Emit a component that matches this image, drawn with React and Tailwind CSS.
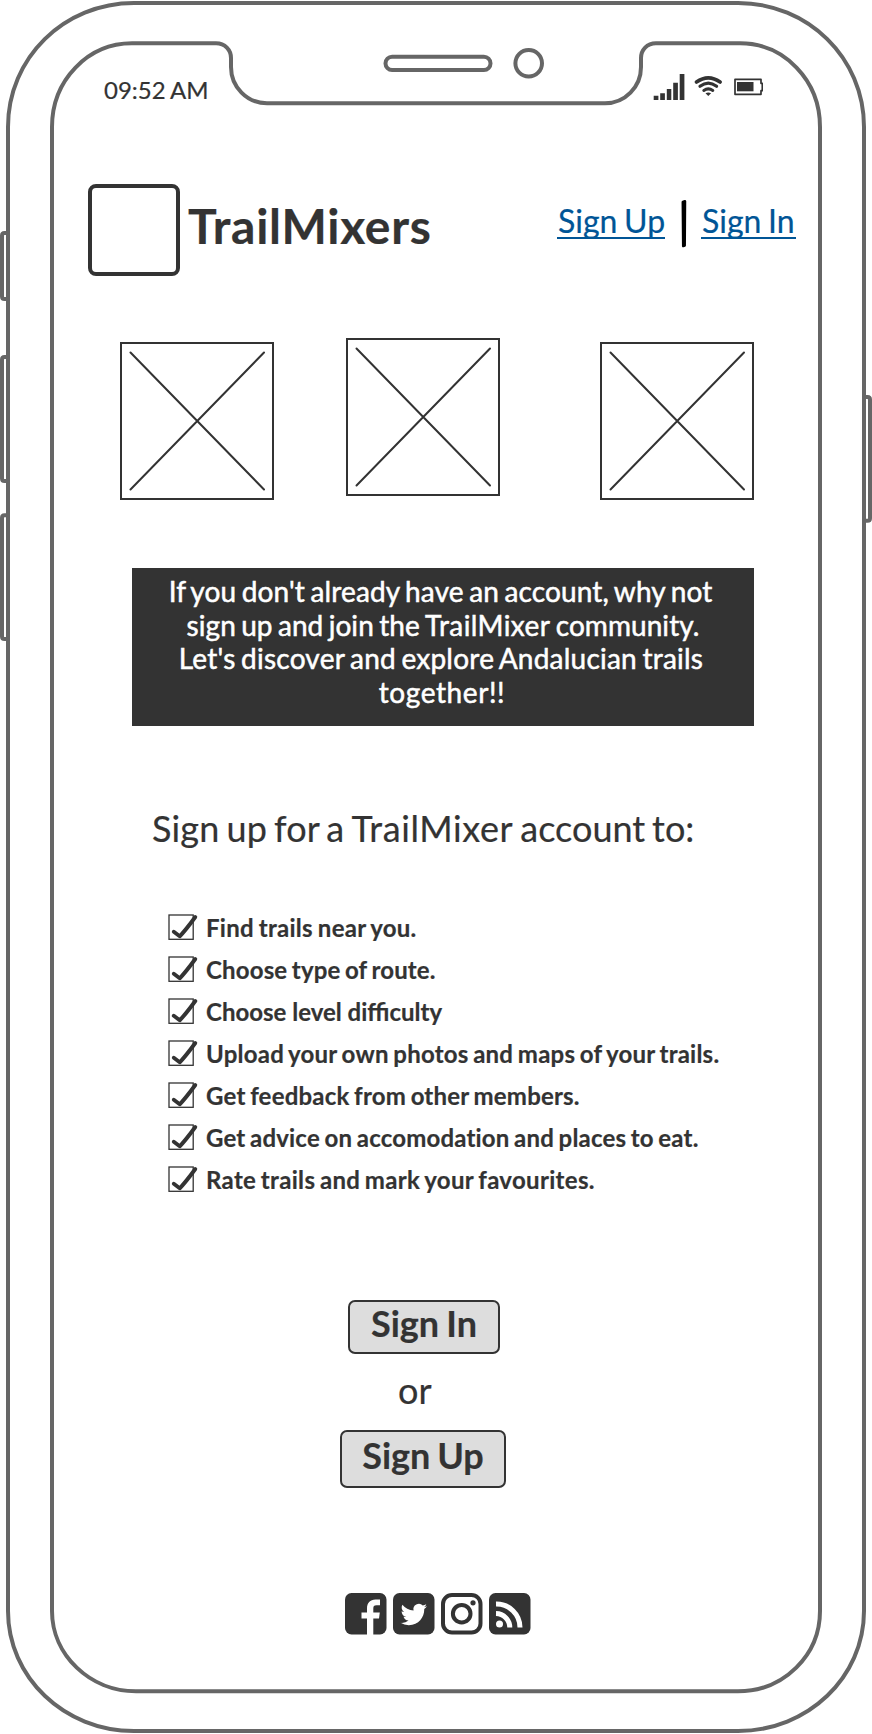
const ink = "#333333";

function DeviceFrame() {
  return (
    <svg className="absolute inset-0" width="872" height="1734" viewBox="0 0 872 1734" fill="none" stroke="#666666" strokeWidth="4">
      <path d="M8 233H4.500Q2 233 2 235.500V296.500Q2 299 4.500 299H8" />
      <path d="M8 357H4.500Q2 357 2 359.500V478.500Q2 481 4.500 481H8" />
      <path d="M8 515.300H4.500Q2 515.300 2 517.800V636.500Q2 639 4.500 639H8" />
      <path d="M864 397H867.500Q870 397 870 399.500V518.200Q870 520.700 867.500 520.700H864" />
      <path d="M134 3H738C808 3 864 58 864 127V1611C864 1677 808 1731 738 1731H134C64 1731 8 1677 8 1611V127C8 58 64 3 134 3Z" />
      <path d="M132 43.300H216C225 43.300 231 50 231 58V67C231 87 247 103.300 267 103.300H605C625 103.300 641 87 641 67V58C641 50 647 43.300 656 43.300H740C784 43.300 820 80 820 127V1611C820 1655 784 1691.300 738 1691.300H136C90 1691.300 52 1655 52 1611V127C52 80 88 43.300 132 43.300Z" />
      <rect x="385.500" y="56.700" width="105" height="13.300" rx="6.600" />
      <circle cx="528.700" cy="63.300" r="13.300" />
    </svg>
  );
}

function StatusIcons() {
  return (
    <svg width="110" height="28" viewBox="653 73 110 28" fill={ink}>
      <path d="M653.700 95.700h4.700v4.300h-4.700zM660.200 93.300h4.700v6.700h-4.700zM666.800 89h4.500v11h-4.500zM673.200 82.700h4.700v17.300h-4.700zM679.700 74h4.700v26h-4.700z" />
      <g fill="none" stroke={ink} strokeLinecap="round">
        <path d="M696.500 82Q708.300 73.600 720.100 82" strokeWidth="3.600" />
        <path d="M700 86.300Q708.300 80 716.600 86.300" strokeWidth="3.200" />
        <path d="M703.800 90.400Q708.300 87.300 712.800 90.400" strokeWidth="3" />
      </g>
      <path d="M705.500 93.300Q708.300 91.500 711.100 93.300L708.300 96Z" />
      <path d="M735 79.300H761V83.300H762.300V90.700H761V94.300H735Z" fill="none" stroke={ink} strokeWidth="1.700" strokeLinejoin="round" />
      <rect x="737" y="82" width="16.500" height="9.300" />
    </svg>
  );
}

function Placeholder({ className = "" }) {
  return (
    <div className={"h-[158px] w-[154px] border-2 border-[#333333] " + className}>
      <svg width="150" height="154" viewBox="0 0 150 154" stroke={ink} strokeWidth="2" strokeLinecap="round">
        <path d="M8.500 8.500L142 145.500M142 8.500L8.500 145.500" />
      </svg>
    </div>
  );
}

const benefits = [
  ["Find trails near you.", "tracking-[0.27px] [word-spacing:-1.2px]"],
  ["Choose type of route.", "tracking-[0.16px] [word-spacing:-1.5px]"],
  ["Choose level difficulty", "tracking-normal"],
  ["Upload your own photos and maps of your trails.", "tracking-[0.24px] [word-spacing:-1.5px]"],
  ["Get feedback from other members.", "tracking-[0.2px] [word-spacing:-1.4px]"],
  ["Get advice on accomodation and places to eat.", "tracking-[0.18px] [word-spacing:-1.4px]"],
  ["Rate trails and mark your favourites.", "tracking-[0.32px] [word-spacing:-1.5px]"],
];

function CheckItem({ label, spacing }) {
  return (
    <li className="flex h-[42px] items-start">
      <svg className="shrink-0" width="38" height="30" viewBox="168 912 38 30" fill="none">
        <rect x="169" y="915" width="24.200" height="24.300" stroke={ink} strokeWidth="1.300" />
        <path d="M173.800 931.800L179.700 936.300Q185 931 195.300 917" stroke={ink} strokeWidth="3.900" strokeLinecap="round" strokeLinejoin="round" />
      </svg>
      <span className={"whitespace-nowrap pt-px text-[24px] leading-[29px] font-bold " + spacing}>{label}</span>
    </li>
  );
}

function SocialLinks() {
  return (
    <div className="flex gap-[6px] pl-[345px] pt-[104.500px]">
      <svg width="42" height="42" viewBox="0 0 42 42">
        <rect width="41.500" height="41.500" rx="6.500" fill={ink} />
        <path d="M22 42V25.500H16.500V19.500H22V15.500C22 10 25 6.500 30.500 6.500H35V12.300H31.500C29 12.300 28.300 13.300 28.300 15.500V19.500H34.800L34 25.500H28.300V42Z" fill="white" />
      </svg>
      <svg width="42" height="42" viewBox="0 0 42 42">
        <rect width="41.500" height="41.500" rx="6.500" fill={ink} />
        <path transform="translate(7.500 7.800) scale(1.120)" fill="white" d="M23.640 4.940c-.87.390-1.800.650-2.780.760 1-.600 1.770-1.550 2.130-2.680-.940.560-1.980.960-3.080 1.180A4.840 4.840 0 0 0 11.660 8.600C7.640 8.400 4.070 6.470 1.680 3.540a4.850 4.850 0 0 0 1.500 6.460 4.820 4.820 0 0 1-2.190-.600v.060c0 2.340 1.670 4.300 3.880 4.740-.720.200-1.480.230-2.180.080a4.840 4.840 0 0 0 4.520 3.360A9.720 9.720 0 0 1 0 19.650 13.700 13.700 0 0 0 7.420 21.820c8.900 0 13.770-7.370 13.770-13.770l-.010-.630a9.830 9.830 0 0 0 2.460-2.480z" />
      </svg>
      <svg width="42" height="42" viewBox="0 0 42 42" fill="none" stroke={ink}>
        <rect x="2" y="2" width="37.500" height="37.500" rx="9" strokeWidth="4" />
        <circle cx="20.700" cy="20.700" r="8.800" strokeWidth="4" />
        <circle cx="32" cy="9.800" r="2.600" fill={ink} stroke="none" />
      </svg>
      <svg width="42" height="42" viewBox="0 0 42 42" fill="none">
        <rect width="41.500" height="41.500" rx="6.500" fill={ink} />
        <circle cx="10.500" cy="31" r="3.500" fill="white" />
        <path d="M7 20.500A14 14 0 0 1 20.800 34.500M7 11A23.500 23.500 0 0 1 31 34.500" stroke="white" strokeWidth="5" />
      </svg>
    </div>
  );
}

export default function App() {
  return (
    <main className="relative h-[1734px] w-[872px] overflow-hidden bg-white font-['Lato',sans-serif] text-[#333333] [-webkit-text-stroke:0.2px]">
      <DeviceFrame />
      <div className="relative flex flex-col">
        <div className="flex h-[184px] items-start justify-between pr-[109px] pl-[104px] pt-[73px]">
          <span className="pt-[2px] text-[24px] leading-[29px] [word-spacing:-1px]">09:52 AM</span>
          <StatusIcons />
        </div>

        <header className="flex h-[154px] items-start pl-[88px]">
          <div className="size-[92px] rounded-[8px] border-4 border-[#333333]" />
          <h1 className="ml-[8px] w-[369px] pt-[13px] text-[48px] leading-[58px] font-bold tracking-[0.75px]">TrailMixers</h1>
          <nav className="flex items-start pt-[18px] text-[32px] leading-[38px] text-[#005596] [word-spacing:-1.5px]">
            <a className="h-[37px] w-[108px] border-b-2 border-[#005596] pl-px whitespace-nowrap">Sign Up</a>
            <svg className="-mt-[2px] mr-[13px] ml-[15px]" width="8" height="48" viewBox="0 0 8 48">
              <path d="M2.800 2L5 1.300L4.700 45.500L3.200 46Z" fill="black" stroke="black" strokeWidth="2.500" strokeLinejoin="round" />
            </svg>
            <a className="h-[37px] w-[95px] border-b-2 border-[#005596] pl-px whitespace-nowrap">Sign In</a>
          </nav>
        </header>

        <section className="flex h-[230px] items-start pl-[120px]">
          <Placeholder className="mt-[4px]" />
          <Placeholder className="ml-[72px]" />
          <Placeholder className="mt-[4px] ml-[100px]" />
        </section>

        <section className="ml-[132px] h-[158px] w-[622px] bg-[#333333] pt-[7px] pr-[4px] text-center text-[28px] leading-[33.600px] text-white [-webkit-text-stroke:0.5px_white] [word-spacing:-1.9px]">
          <p className="pr-px tracking-[0.14px]">If you don't already have an account, why not</p>
          <p className="pl-[4px] tracking-[0.06px]">
            sign up and join the <span className="tracking-[0.4px]">TrailMixer</span> community.
          </p>
          <p className="tracking-[0.23px]">Let's discover and explore Andalucian trails</p>
          <p className="pl-[2px] tracking-[0.6px]">together!!</p>
        </section>

        <h2 className="h-[186px] pl-[152px] pt-[81px] text-[36px] leading-[43px] tracking-[0.14px] [word-spacing:-2.3px]">
          Sign up for a <span className="tracking-[0.6px]">TrailMixer</span> <span className="tracking-[0px]">account to:</span>
        </h2>

        <ul className="h-[388px] pl-[168px]">
          {benefits.map(([label, spacing]) => (
            <CheckItem key={label} label={label} spacing={spacing} />
          ))}
        </ul>

        <section className="flex h-[188px] flex-col items-start text-[36px]">
          <button className="ml-[348px] h-[54px] w-[152px] rounded-[7px] border-2 border-[#333333] bg-[#dddddd] pb-[7px] leading-[43px] font-bold [word-spacing:-1.5px]">Sign In</button>
          <span className="ml-[397px] h-[76px] pt-[15px] pl-px leading-[43px]">or</span>
          <button className="ml-[340px] h-[58px] w-[166px] rounded-[7px] border-2 border-[#333333] bg-[#dddddd] pb-[7px] leading-[43px] font-bold [word-spacing:-2px]">Sign Up</button>
        </section>

        <SocialLinks />
      </div>
    </main>
  );
}
